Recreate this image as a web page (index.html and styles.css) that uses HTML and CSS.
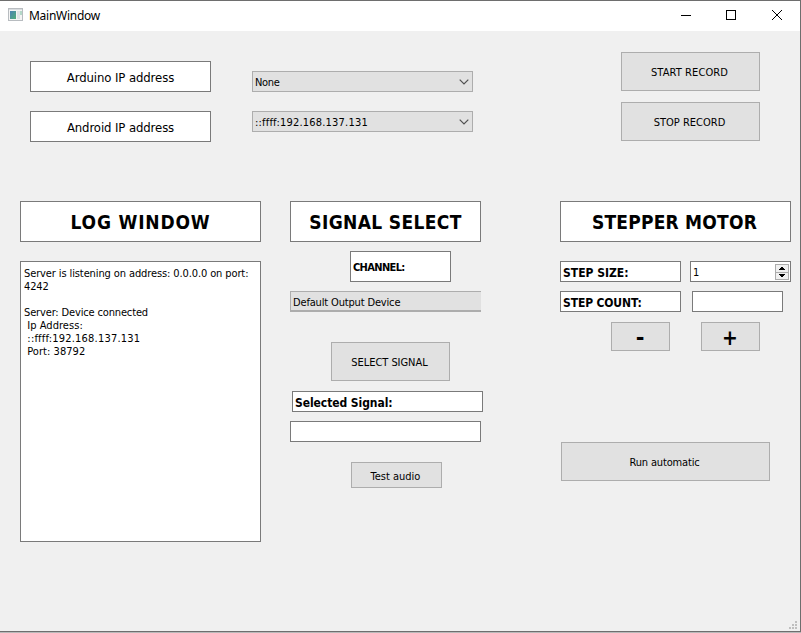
FILE: index.html
```html
<!DOCTYPE html>
<html lang="en">
<head>
<meta charset="utf-8">
<title>MainWindow</title>
<link rel="stylesheet" href="styles.css">
</head>
<body>
<div class="window">
  <header class="titlebar">
    <svg class="app-icon" width="15" height="13" viewBox="0 0 15 13" shape-rendering="crispEdges"><defs><linearGradient id="g" x1="0" y1="0" x2="1" y2="1"><stop offset="0" stop-color="#4b82b4"/><stop offset="1" stop-color="#50ad78"/></linearGradient></defs><path fill="#b8bcc0" d="M0 0h15v13H0z"/><path fill="#f4f4f4" d="M1 2h13v10H1z"/><path fill="#d8dcdf" d="M1 1h13v1H1z"/><path fill="url(#g)" d="M2 3h6v8H2z"/><path fill="#dfe3e5" d="M9 3h3v8H9z"/><path fill="#b4d8c8" d="M12 3h2v4h-2z"/></svg>
    <h1 class="title"><span>MainWindow</span></h1>
    <svg class="controls" width="102" height="12" viewBox="0 0 102 12" fill="none" stroke="#000"><path d="M0 5.5h10M45.500 .5h9v9h-9z" shape-rendering="crispEdges"/><path d="M91 0l10 10M101 0L91 10"/></svg>
  </header>
  <main>
    <section class="top">
      <div class="labels">
        <div class="box ip"><span class="t-ip">Arduino IP address</span></div>
        <div class="box ip"><span class="t-ip">Android IP address</span></div>
      </div>
      <div class="combos">
        <div class="combo"><span>None</span><svg width="10" height="6" viewBox="0 0 10 6"><path d="M.7 .7L5 5L9.300 .7" fill="none" stroke="#505050" stroke-width="1.200"/></svg></div>
        <div class="combo"><span class="t-addr">::ffff:192.168.137.131</span><svg width="10" height="6" viewBox="0 0 10 6"><path d="M.7 .7L5 5L9.300 .7" fill="none" stroke="#505050" stroke-width="1.200"/></svg></div>
      </div>
      <div class="record">
        <button class="t-start">START RECORD</button>
        <button class="t-stop">STOP RECORD</button>
      </div>
    </section>
    <section class="panels">
      <div class="panel">
        <h2 class="box"><span class="t-log">LOG WINDOW</span></h2>
        <div class="box log"><span class="l1">Server is listening on address: 0.0.0.0 on port:</span>
<span class="l1">4242</span>

<span class="l2">Server: Device connected</span>
<span class="l3"> Ip Address:</span>
<span class="t-addr"> ::ffff:192.168.137.131</span>
<span class="l3"> Port: 38792</span></div>
      </div>
      <div class="panel">
        <h2 class="box"><span class="t-signal">SIGNAL SELECT</span></h2>
        <div class="box field channel"><span class="t-channel">CHANNEL:</span></div>
        <div class="combo clipped"><span class="t-device">Default Output Device</span></div>
        <button class="select"><span class="t-select">SELECT SIGNAL</span></button>
        <div class="box field selected"><span class="t-selected">Selected Signal:</span></div>
        <div class="box field empty"></div>
        <button class="test"><span class="t-test">Test audio</span></button>
      </div>
      <div class="panel">
        <h2 class="box"><span class="t-stepper">STEPPER MOTOR</span></h2>
        <div class="row size">
          <div class="box field label"><span class="t-size">STEP SIZE:</span></div>
          <div class="box spin"><span>1</span><svg width="14" height="16" viewBox="0 0 14 16" shape-rendering="crispEdges"><path d="M.5 .5h13v15H.5zM0 8.500h14" fill="#f0f0f0" stroke="#acacac"/><path d="M6 3h2v1h1v1h1v1H4V5h1V4h1zM4 10h6v1H9v1H8v1H6v-1H5v-1H4z"/></svg></div>
        </div>
        <div class="row">
          <div class="box field label"><span class="t-count">STEP COUNT:</span></div>
          <div class="box count"></div>
        </div>
        <div class="row steps"><button class="minus">-</button><button>+</button></div>
        <button class="run"><span class="t-run">Run automatic</span></button>
      </div>
    </section>
    <svg class="grip" width="8" height="8" viewBox="0 0 8 8" fill="#bfbfbf"><path d="M6 0h2v2H6zM3 3h2v2H3zM6 3h2v2H6zM0 6h2v2H0zM3 6h2v2H3zM6 6h2v2H6z"/></svg>
  </main>
</div>
</body>
</html>
```
FILE: styles.css
```css
* { box-sizing: border-box; }
body { margin: 0; height: 633px; overflow: hidden; background: #b9b9b9; color: #000; font: 11px/13px "DejaVu Sans Condensed", "DejaVu Sans", sans-serif; letter-spacing: -.3px; }
.window { width: 801px; height: 632px; display: flex; flex-direction: column; border: solid #6e6e6e; border-width: 1px 1px 1px 0; background: #f0f0f0; }
.titlebar { height: 30px; display: flex; align-items: flex-start; background: #fff; padding: 7px 17px 0 8px; }
.title { margin: 1px 0 0 6px; font: 12px/13px "Noto Sans", sans-serif; letter-spacing: -.27px; }
.controls { margin: 2px 0 0 auto; }
main { position: relative; flex: 1; }
span { white-space: pre; }
.box { background: #fff; border: 1px solid #7a7a7a; display: flex; align-items: center; }
button { background: #e1e1e1; border: 1px solid #adadad; border-radius: 0; padding: 1px 0 0; font: inherit; letter-spacing: inherit; color: #000; display: block; }
.top { display: flex; align-items: flex-start; padding: 21px 40px 0 30px; height: 170px; }
.labels { width: 181px; display: grid; gap: 19px; padding-top: 9px; }
.ip { height: 31px; justify-content: center; font-size: 13px; padding-top: 2px; letter-spacing: -.1px; }
.combos { width: 221px; margin-left: 41px; display: grid; gap: 19px; padding-top: 19px; }
.combo { height: 21px; background: #e1e1e1; border: 1px solid #adadad; display: flex; align-items: center; justify-content: space-between; padding: 1px 3px 0 2px; }
.record { width: 139px; margin-left: auto; display: grid; gap: 11px; }
.record button { height: 39px; padding-right: 2px; }
.panels { display: grid; grid-template-columns: 270px 270px 231px; padding-left: 20px; align-items: start; }
.panel { width: 241px; }
.panel:nth-child(2) { width: 193px; }
.panel:nth-child(3) { width: 231px; }
h2 { margin: 0; height: 41px; justify-content: center; font-size: 19px; line-height: 24px; }
.panel:nth-child(2) h2, .clipped, .empty { width: 191px; }
.log { display: block; height: 281px; margin-top: 19px; padding: 5px 3px; white-space: pre; }
.field { height: 21px; padding: 3px 0 0 2px; font-weight: bold; font-size: 12px; }
.channel { width: 101px; height: 31px; margin: 9px 0 9px 60px; padding-top: 2px; font-size: 11px; }
.clipped { border-width: 1px 0 2px 1px; padding-top: 2px; }
.select { width: 119px; height: 39px; margin: 30px 0 10px 41px; padding-right: 2px; }
.selected { width: 191px; margin: 0 0 9px 2px; }
.test { width: 91px; height: 26px; margin: 20px 0 0 61px; padding: 3px 2px 0 0; }
.row { display: flex; margin-top: 9px; }
.size { margin-top: 19px; }
.label { width: 121px; }
.spin { width: 101px; height: 21px; margin-left: 9px; padding: 0 1px 0 2px; justify-content: space-between; }
.spin span { padding-top: 2px; }
.count { width: 91px; height: 21px; margin-left: 11px; }
.steps { margin: 10px 0 0 51px; gap: 31px; }
.steps button { width: 59px; height: 29px; font-weight: bold; font-size: 21px; line-height: 24px; padding: 3px 1px 0 0; letter-spacing: 0; }
.steps .minus { font-family: "DejaVu Sans", sans-serif; }
.run { width: 209px; height: 39px; margin: 91px 0 0 1px; padding-right: 2px; }
.grip { position: absolute; right: 3px; bottom: 2px; }

/* Tracking per label */
.t-log { letter-spacing: .8px; }
.t-signal { letter-spacing: .35px; }
.t-stepper { letter-spacing: .2px; padding-right: 2px; }
.t-start { letter-spacing: .1px; }
.t-stop { letter-spacing: 0; }
.t-select { letter-spacing: -.05px; }
.t-channel { letter-spacing: -.65px; }
.t-device { letter-spacing: -.16px; }
.t-selected { letter-spacing: -.07px; }
.t-test { letter-spacing: 0; }
.t-size { letter-spacing: 0; }
.t-count { letter-spacing: -.13px; }
.t-run { letter-spacing: -.15px; }
.t-addr { letter-spacing: .2px; }
.l1 { letter-spacing: -.11px; }
.l2 { letter-spacing: -.15px; }
.l3 { letter-spacing: .05px; }
```
